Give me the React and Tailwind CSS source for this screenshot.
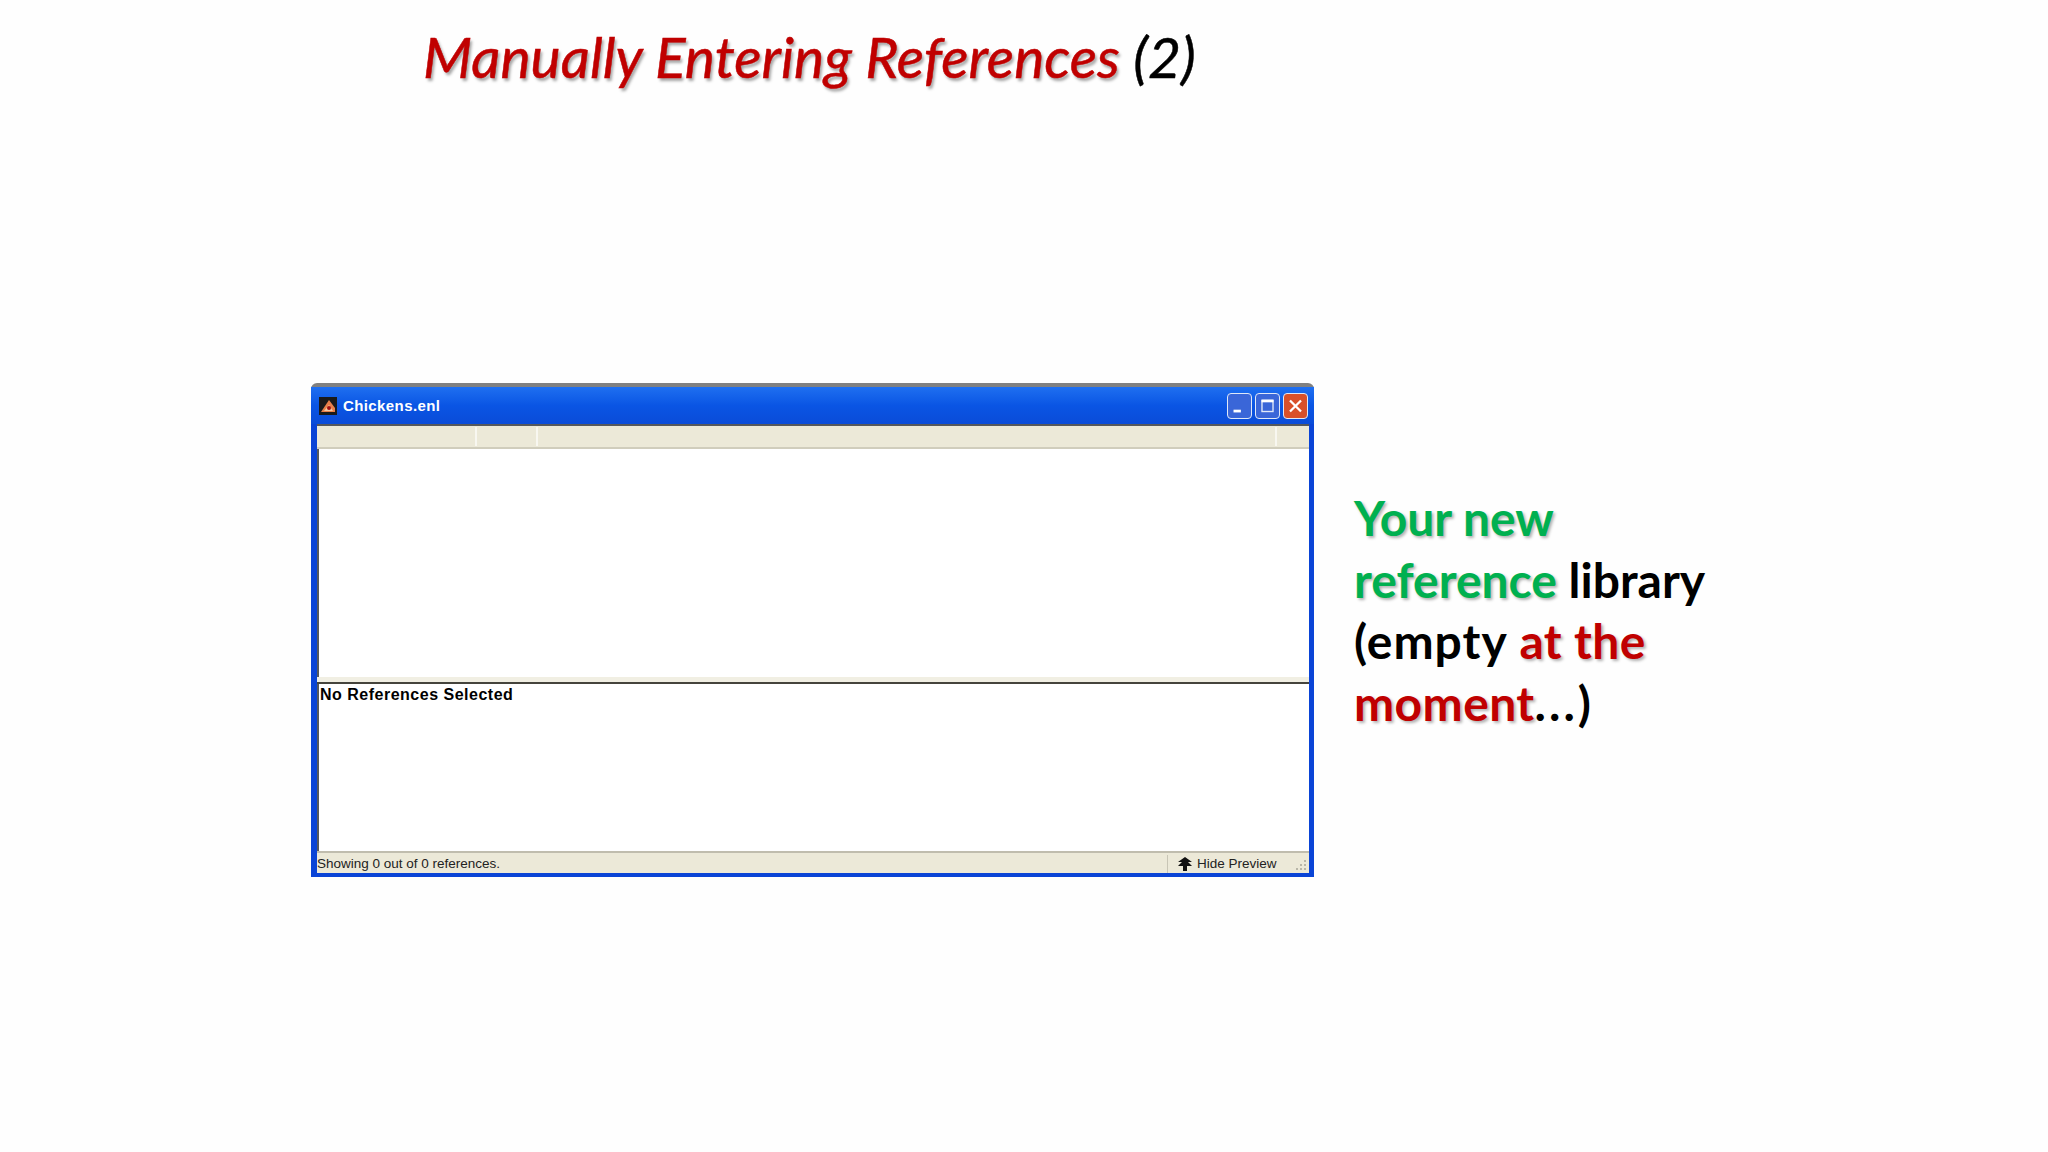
import React from 'react';

const WinButton = ({ className, children }) => (
  <div className={`w-[25px] h-[26px] rounded-[4px] border border-[#dfe8f8] flex items-center justify-center ${className}`}>
    <svg width="25" height="26" viewBox="0 0 25 26">{children}</svg>
  </div>
);

const HeaderCell = ({ className }) => <div className={`border-r-2 border-[#f8f7f0] h-[19px] ${className}`} />;

const App = () => {
  return (
    <div className="w-[2048px] h-[1152px] bg-[#fefefe] overflow-hidden font-['Lato',sans-serif]">
      {/* Slide title */}
      <h1 className="pl-[423px] pt-[20px] h-[383px] text-[57px] leading-[72px] italic font-normal text-black [-webkit-text-stroke:0.5px]">
        <span className="text-[#c00000] [text-shadow:2px_3px_3px_rgba(0,0,0,0.35)]">Manually Entering References</span> (2)
      </h1>

      <div className="flex pl-[311px]">
        {/* EndNote library window */}
        <div className="w-[1003px] h-[494px] flex flex-col bg-[#0a44d6] rounded-t-[6px] border-t-[4px] border-[#808080]">
          <div className="h-[37px] shrink-0 flex items-center pl-[8px] pr-[6px] pt-[1px] bg-gradient-to-b from-[#1f6ff0] via-[#0a55e4] to-[#0a4cd8]">
            <svg width="18" height="18" viewBox="0 0 18 18">
              <rect width="18" height="18" fill="#1a1a1a" />
              <path d="M2 15 L10 3 L16 11 L16 15 Z" fill="#e8804a" />
              <path d="M5 14 L10 8 L14 14 Z" fill="#f4c9a0" />
              <circle cx="10" cy="11" r="2" fill="#a01010" />
            </svg>
            <span className="ml-[6px] text-white text-[15px] font-bold tracking-[0.4px] font-['Liberation_Sans',sans-serif]">Chickens.enl</span>
            <div className="ml-auto flex gap-[3px]">
              <WinButton className="bg-[#3a66d8]">
                <rect x="6" y="17" width="8" height="3" fill="#fff" />
              </WinButton>
              <WinButton className="bg-[#3a66d8]">
                <rect x="6.5" y="7" width="12" height="12" fill="none" stroke="#dfe8f8" strokeWidth="1.5" />
                <rect x="6" y="6" width="13" height="3" fill="#fff" />
              </WinButton>
              <WinButton className="bg-[#d9502a]">
                <path d="M6.5 7 L18.5 19 M18.5 7 L6.5 19" stroke="#fff" strokeWidth="2.5" />
              </WinButton>
            </div>
          </div>

          <div className="flex-1 flex flex-col ml-[6px] mr-[5px] mb-[4px] bg-[#ece9d8]">
            {/* Column headers */}
            <div className="h-[25px] border-t-2 border-b-2 border-t-[#55585c] border-b-[#d0cdbc] flex items-center shrink-0">
              <HeaderCell className="w-[160px]" />
              <HeaderCell className="w-[61px]" />
              <HeaderCell className="w-[739px]" />
            </div>
            {/* Reference list */}
            <div className="h-[228px] bg-white border-l-2 border-[#55585c]" />
            {/* Splitter */}
            <div className="h-[7px] bg-[#f1efe3] border-b-2 border-[#45443c]" />
            {/* Preview */}
            <div className="h-[167px] bg-white border-l-2 border-[#55585c] pl-[1px] pt-[1px] text-black text-[16px] leading-[20px] font-bold tracking-[0.5px] font-['Liberation_Sans',sans-serif]">
              No References Selected
            </div>
            {/* Status bar */}
            <div className="flex-1 min-h-0 flex items-center pt-[2px] border-t-2 border-[#c0bdae] text-[#222] text-[13.5px] leading-none font-['Liberation_Sans',sans-serif]">
              <span className="w-[850px]">Showing 0 out of 0 references.</span>
              <div className="flex items-center h-full border-l border-[#c8c5b5] pl-[9px] gap-[4px]">
                <svg width="16" height="14" viewBox="0 0 16 14">
                  <path d="M8 0 L15 5 L11 5 L15 9 L10 9 L10 14 L6 14 L6 9 L1 9 L5 5 L1 5 Z" fill="#111" />
                </svg>
                <span>Hide Preview</span>
              </div>
              <svg className="ml-auto mr-[2px] self-end mb-[1px]" width="13" height="13" viewBox="0 0 13 13" fill="#b8b6a8">
                <rect x="10" y="1" width="2" height="2" />
                <rect x="6" y="5" width="2" height="2" />
                <rect x="10" y="5" width="2" height="2" />
                <rect x="2" y="9" width="2" height="2" />
                <rect x="6" y="9" width="2" height="2" />
                <rect x="10" y="9" width="2" height="2" />
              </svg>
            </div>
          </div>
        </div>

        {/* Side note */}
        <p className="ml-[40px] mt-[104px] w-[365px] text-[48px] leading-[61.5px] font-bold text-black">
          <span className="text-[#00b050] [text-shadow:2px_2px_3px_rgba(0,0,0,0.3)]">Your new reference</span> library{' '}
          <span className="tracking-[1px]">(empty</span>{' '}
          <span className="text-[#c00000] tracking-[0.4px] [text-shadow:2px_2px_3px_rgba(0,0,0,0.3)]">at the moment</span>
          <span className="tracking-[3px]">...)</span>
        </p>
      </div>
    </div>
  );
};

export default App;
